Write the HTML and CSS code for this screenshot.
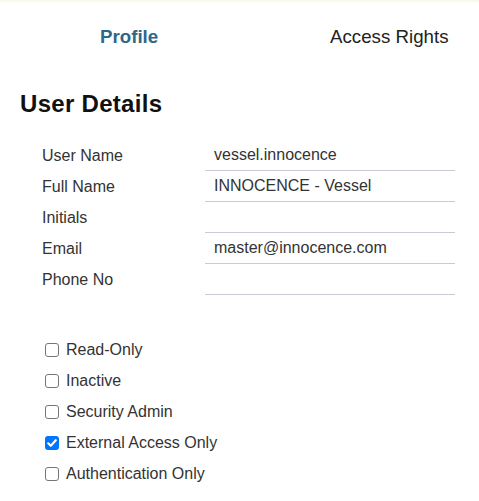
FILE: index.html
```html
<!DOCTYPE html>
<html>
<head>
<meta charset="utf-8">
<link rel="stylesheet" href="styles.css">
</head>
<body>
<div class="topline"></div>
<nav class="tabs">
  <div class="tab active">Profile</div>
  <div class="tab">Access Rights</div>
</nav>
<h2 class="title">User Details</h2>
<div class="form">
  <div class="row"><div class="label">User Name</div><div class="value">vessel.innocence</div></div>
  <div class="row"><div class="label">Full Name</div><div class="value">INNOCENCE - Vessel</div></div>
  <div class="row"><div class="label">Initials</div><div class="value"></div></div>
  <div class="row"><div class="label">Email</div><div class="value">master@innocence.com</div></div>
  <div class="row"><div class="label">Phone No</div><div class="value"></div></div>
</div>
<div class="checks">
  <label class="check"><span class="box"></span>Read-Only</label>
  <label class="check"><span class="box"></span>Inactive</label>
  <label class="check"><span class="box"></span>Security Admin</label>
  <label class="check"><span class="box checked"><svg viewBox="0 0 14 14" width="14" height="14"><path d="M3.2 7.3 L5.8 9.8 L10.8 4.2" fill="none" stroke="#fff" stroke-width="2.2" stroke-linecap="round" stroke-linejoin="round"/></svg></span>External Access Only</label>
  <label class="check"><span class="box"></span>Authentication Only</label>
</div>
</body>
</html>
```
FILE: styles.css
```css
html, body {
  margin: 0;
  padding: 0;
  background: #fff;
  font-family: "Liberation Sans", Arial, sans-serif;
  color: #222;
  overflow: hidden;
}
.topline {
  height: 3px;
  background: linear-gradient(#f6f6e4, #fbfbf3 60%, #fff);
}
.tabs {
  display: flex;
  padding: 23px 0 0 100px;
  height: 64px;
  box-sizing: border-box;
}
.tab {
  font-size: 18.72px;
  line-height: 22px;
  color: #222;
}
.tab.active {
  font-weight: bold;
  color: #2e6788;
  width: 230px;
}
.title {
  margin: 23px 0 0 20px;
  font-size: 24px;
  line-height: 28px;
  font-weight: bold;
  color: #111;
  letter-spacing: 0.3px;
}
.form {
  margin-top: 22px;
  padding-left: 42px;
}
.row {
  display: flex;
  height: 31px;
}
.label {
  width: 163px;
  font-size: 16px;
  line-height: 31px;
  color: #333;
}
.value {
  width: 250px;
  box-sizing: border-box;
  height: 31px;
  border-bottom: 1px solid #c9cad6;
  padding-left: 9px;
  font-size: 16px;
  line-height: 30px;
  color: #333;
}
.checks {
  margin-top: 39px;
  padding-left: 45px;
  display: flex;
  flex-direction: column;
}
.check {
  display: flex;
  align-items: center;
  height: 31px;
  font-size: 16px;
  color: #333;
  gap: 7px;
}
.box {
  width: 14px;
  height: 14px;
  box-sizing: border-box;
  border: 1.5px solid #767676;
  border-radius: 3px;
  display: flex;
  align-items: center;
  justify-content: center;
  background: #fff;
}
.box.checked {
  background: #0075ff;
  border: none;
}
.box svg {
  display: block;
}
```
